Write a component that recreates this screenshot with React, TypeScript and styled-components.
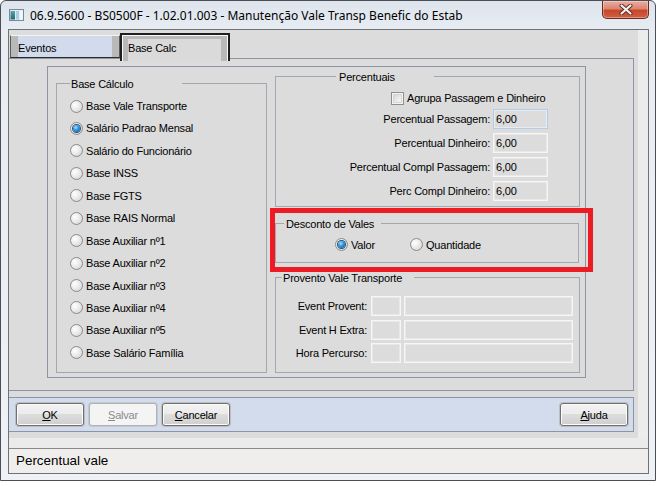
import React from "react";
import styled, { createGlobalStyle, css } from "styled-components";

const GlobalStyle = createGlobalStyle`
  html, body { margin: 0; padding: 0; background: #ffffff; }
  body { font-family: "Liberation Sans", Arial, sans-serif; color: #000; }
  * { box-sizing: border-box; }
`;

const Window = styled.div`
  width: 656px;
  height: 481px;
  border: 1px solid #4b4f55;
  border-radius: 6px 6px 0 0;
  background: linear-gradient(180deg, #dde4ec 0%, #e8edf3 30px, #eef1f5 100%);
  display: flex;
  flex-direction: column;
  overflow: hidden;
`;

const TitleBar = styled.div`
  height: 28px;
  flex: none;
  display: flex;
  align-items: center;
  padding: 0 6px 0 8px;
`;

const Title = styled.span`
  margin-left: 6px;
  font-family: "Noto Sans", "Liberation Sans", sans-serif;
  font-size: 12px;
  color: #000;
  white-space: nowrap;
`;

const CloseButton = styled.div`
  align-self: flex-start;
  margin-left: auto;
  width: 47px;
  height: 18px;
  border: 1px solid #6a2a1f;
  border-top: none;
  border-radius: 0 0 5px 5px;
  background: linear-gradient(180deg, #e9ada0 0%, #dc8570 45%, #c8462c 55%, #d0603f 100%);
  box-shadow: inset 0 0 0 1px rgba(255, 255, 255, 0.35);
  display: flex;
  align-items: center;
  justify-content: center;
`;

const Client = styled.div`
  flex: 1;
  margin: 0 6px 6px 7px;
  border: 1px solid #6e7175;
  background: #dcdcdc;
  display: flex;
  flex-direction: column;
`;

const Workspace = styled.div`
  display: flex;
  height: 408px;
  flex: none;
`;

const Main = styled.div`
  width: 625px;
  display: flex;
  flex-direction: column;
`;

const SideStrip = styled.div`
  width: 10px;
  margin-left: 4px;
  background: #ececec;
`;

const Band = styled.div`
  height: 10px;
  flex: none;
  background: #ebebeb;
`;

const StatusBar = styled.div`
  height: 25px;
  flex: none;
  border-top: 1px solid #8a8a8a;
  background: #f0eeec;
  padding-left: 7px;
  font-size: 13.4px;
  line-height: 24px;
`;

const TabRow = styled.div`
  height: 28px;
  flex: none;
  display: flex;
  align-items: flex-end;
  padding-left: 1px;
`;

const Tab = styled.div<{ $active?: boolean }>`
  width: 110px;
  font-size: 11px;
  letter-spacing: -0.2px;
  display: flex;
  align-items: center;
  ${(p) =>
    p.$active
      ? css`
          height: 28px;
          margin-bottom: -3px;
          position: relative;
          z-index: 1;
          border: 2px solid #1f1f1f;
          border-bottom: none;
          background: #dadada;
          padding-left: 6px;
          box-shadow: inset 1px 1px 0 #f8f8f8, inset -1px 0 0 #f8f8f8, inset 6px 4px 0 #b9b9b9,
            inset -7px 0 0 #b9b9b9;
        `
      : css`
          height: 23px;
          border: 1px solid #5a5a5a;
          border-top-color: #f4f4f4;
          border-bottom-color: #2b2b2b;
          background: #d1dbeb;
          padding: 2px 0 0 7px;
          box-shadow: inset 7px 0 0 #b9b9b9, inset -7px 0 0 #b9b9b9;
        `}
`;

const TabPage = styled.div`
  height: 333px;
  flex: none;
  border: 1px solid #8d95a3;
  border-left: none;
  padding: 7px 0 0 38px;
`;

const OuterPanel = styled.div`
  width: 539px;
  height: 312px;
  border: 1px solid #8d95a3;
  display: flex;
  align-items: flex-start;
  gap: 8px;
  padding: 9px 5px 4px 8px;
`;

const Group = styled.div<{ $w: number; $h: number; $top?: number }>`
  position: relative;
  flex: none;
  width: ${(p) => p.$w}px;
  height: ${(p) => p.$h}px;
  margin-top: ${(p) => p.$top ?? 0}px;
  border: 1px solid #a2a7b0;
`;

const Caption = styled.span<{ $left: number; $width: number; $pad: number }>`
  position: absolute;
  top: -7px;
  left: ${(p) => p.$left}px;
  width: ${(p) => p.$width}px;
  height: 15px;
  line-height: 15px;
  padding-left: ${(p) => p.$pad}px;
  background: #dcdcdc;
  font-size: 11px;
  letter-spacing: -0.2px;
  white-space: nowrap;
`;

const RightColumn = styled.div`
  position: relative;
  width: 305px;
  display: flex;
  flex-direction: column;
`;

const RadioList = styled.div`
  padding: 10.8px 0 0 13px;
`;

const RadioItem = styled.label<{ $w?: number }>`
  display: flex;
  align-items: center;
  gap: 3px;
  height: 22.45px;
  width: ${(p) => (p.$w ? `${p.$w}px` : "auto")};
  font-size: 11px;
  letter-spacing: -0.2px;
  white-space: nowrap;
`;

const RadioDot = styled.span<{ $checked?: boolean }>`
  flex: none;
  width: 13px;
  height: 13px;
  border-radius: 50%;
  border: 1px solid #8a8b8c;
  background: radial-gradient(circle at 35% 35%, #ffffff 0%, #ebebeb 45%, #cdcdcd 100%);
  display: flex;
  align-items: center;
  justify-content: center;
  &::after {
    content: "";
    display: ${(p) => (p.$checked ? "block" : "none")};
    width: 7px;
    height: 7px;
    border-radius: 50%;
    background: radial-gradient(circle at 40% 35%, #a4e0ff 0%, #2d92d8 45%, #0b4e8a 100%);
    box-shadow: 0 0 0 1px #24507c;
  }
`;

const PctBody = styled.div`
  padding: 12px 30px 0 0;
`;

const CheckRow = styled.label`
  height: 18px;
  display: flex;
  align-items: center;
  gap: 3px;
  padding-left: 115px;
  font-size: 11px;
  letter-spacing: -0.2px;
  white-space: nowrap;
`;

const CheckBox = styled.span`
  flex: none;
  width: 13px;
  height: 13px;
  border: 1px solid #8e8f8f;
  background: linear-gradient(135deg, #c9cbcd 0%, #eeeeee 60%, #f8f8f8 100%);
  box-shadow: inset 0 0 0 1px #f4f4f4, inset 0 0 0 2px #d4d6d8;
`;

const FieldRow = styled.div`
  height: 24px;
  display: grid;
  grid-template-columns: 214px 55px;
  column-gap: 3px;
  align-items: center;
`;

const FieldLabel = styled.span`
  text-align: right;
  font-size: 11px;
  letter-spacing: -0.2px;
  white-space: nowrap;
`;

const Field = styled.div<{ $focus?: boolean }>`
  height: 20px;
  border: 1px solid ${(p) => (p.$focus ? "#b3cde6" : "#f6f6f6")};
  box-shadow: inset 0 0 0 1px ${(p) => (p.$focus ? "#e4edf6" : "#e8e8e8")};
  background: #dcdcdc;
  padding-left: 2px;
  font-size: 11px;
  letter-spacing: -0.2px;
  line-height: 18px;
`;

const DescBody = styled.div`
  display: flex;
  padding: 9.5px 0 0 59px;
`;

const ProvBody = styled.div`
  display: grid;
  grid-template-columns: 91px 30px 169px;
  grid-auto-rows: 20px;
  column-gap: 3.5px;
  row-gap: 3.5px;
  align-items: center;
  padding-top: 18px;
`;

const Highlight = styled.div`
  position: absolute;
  left: -5px;
  top: 132px;
  width: 323px;
  height: 64px;
  border: 5px solid #ed1c24;
  pointer-events: none;
`;

const ButtonBar = styled.div`
  height: 35px;
  flex: none;
  margin-top: 6px;
  border: 1px solid #8c95a5;
  border-left: none;
  background: #d3dcec;
  display: flex;
  align-items: center;
  gap: 5px;
  padding: 0 5px 0 7px;
`;

const Button = styled.div<{ $disabled?: boolean; $right?: boolean }>`
  width: 68px;
  height: 23px;
  margin-left: ${(p) => (p.$right ? "auto" : "0")};
  border-radius: 3px;
  font-size: 11px;
  letter-spacing: -0.2px;
  display: flex;
  align-items: center;
  justify-content: center;
  ${(p) =>
    p.$disabled
      ? css`
          border: 1px solid #adb2b5;
          background: #f4f4f4;
          color: #8a8a8a;
          box-shadow: 0 0 0 1px #c6c9cc;
        `
      : css`
          border: 1px solid #707070;
          background: linear-gradient(180deg, #f2f2f2 0%, #ebebeb 50%, #dddddd 50%, #cfcfcf 100%);
          box-shadow: inset 0 0 0 1px #fbfbfb, 0 0 0 1px #bdbdbd;
        `}
`;

const AppIcon = () => (
  <svg width="15" height="12" viewBox="0 0 15 12">
    <defs>
      <linearGradient id="ic" x1="0" y1="0" x2="0" y2="1">
        <stop offset="0" stopColor="#57a4a9" />
        <stop offset="1" stopColor="#1f6a78" />
      </linearGradient>
    </defs>
    <rect x="0.5" y="0.5" width="14" height="11" fill="#e4eaf0" stroke="#7b8a99" />
    <rect x="1.5" y="2" width="4.5" height="8.5" fill="url(#ic)" />
    <rect x="7" y="2" width="3" height="8.5" fill="#a9cfe4" />
    <rect x="11" y="2" width="2.5" height="8.5" fill="#f7f9fb" />
  </svg>
);

const CloseGlyph = () => (
  <svg width="14" height="11" viewBox="0 0 14 11">
    <path d="M2.5 1.5 L11.5 9.5 M11.5 1.5 L2.5 9.5" stroke="#5c2a22" strokeWidth="4" strokeLinecap="round" />
    <path d="M2.5 1.5 L11.5 9.5 M11.5 1.5 L2.5 9.5" stroke="#f4f1f0" strokeWidth="2.2" strokeLinecap="round" />
  </svg>
);

const baseOptions = [
  "Base Vale Transporte",
  "Salário Padrao Mensal",
  "Salário do Funcionário",
  "Base INSS",
  "Base FGTS",
  "Base RAIS Normal",
  "Base Auxiliar nº1",
  "Base Auxiliar nº2",
  "Base Auxiliar nº3",
  "Base Auxiliar nº4",
  "Base Auxiliar nº5",
  "Base Salário Família",
];

const percentuais = [
  { label: "Percentual Passagem:", value: "6,00", focus: true },
  { label: "Percentual Dinheiro:", value: "6,00" },
  { label: "Percentual Compl Passagem:", value: "6,00" },
  { label: "Perc Compl Dinheiro:", value: "6,00" },
];

const proventos = ["Event Provent:", "Event H Extra:", "Hora Percurso:"];

export default function App() {
  return (
    <>
      <GlobalStyle />
      <Window>
        <TitleBar>
          <AppIcon />
          <Title>06.9.5600 - BS0500F - 1.02.01.003 - Manutenção Vale Transp Benefic do Estab</Title>
          <CloseButton>
            <CloseGlyph />
          </CloseButton>
        </TitleBar>
        <Client>
          <Workspace>
            <Main>
              <TabRow>
                <Tab>Eventos</Tab>
                <Tab $active>Base Calc</Tab>
              </TabRow>
              <TabPage>
                <OuterPanel>
                  <Group $w={211} $h={290} $top={7}>
                    <Caption $left={13} $width={112} $pad={1}>
                      Base Cálculo
                    </Caption>
                    <RadioList>
                      {baseOptions.map((o, i) => (
                        <RadioItem key={o}>
                          <RadioDot $checked={i === 1} />
                          {o}
                        </RadioItem>
                      ))}
                    </RadioList>
                  </Group>
                  <RightColumn>
                    <Group $w={305} $h={131}>
                      <Caption $left={60} $width={98} $pad={3}>
                        Percentuais
                      </Caption>
                      <PctBody>
                        <CheckRow>
                          <CheckBox />
                          Agrupa Passagem e Dinheiro
                        </CheckRow>
                        {percentuais.map((r) => (
                          <FieldRow key={r.label}>
                            <FieldLabel>{r.label}</FieldLabel>
                            <Field $focus={r.focus}>{r.value}</Field>
                          </FieldRow>
                        ))}
                      </PctBody>
                    </Group>
                    <Group $w={304} $h={40} $top={16}>
                      <Caption $left={8} $width={97} $pad={2}>
                        Desconto de Vales
                      </Caption>
                      <DescBody>
                        <RadioItem $w={75}>
                          <RadioDot $checked />
                          Valor
                        </RadioItem>
                        <RadioItem>
                          <RadioDot />
                          Quantidade
                        </RadioItem>
                      </DescBody>
                    </Group>
                    <Group $w={305} $h={96} $top={14}>
                      <Caption $left={6} $width={132} $pad={1}>
                        Provento Vale Transporte
                      </Caption>
                      <ProvBody>
                        {proventos.map((p) => (
                          <React.Fragment key={p}>
                            <FieldLabel>{p}</FieldLabel>
                            <Field />
                            <Field />
                          </React.Fragment>
                        ))}
                      </ProvBody>
                    </Group>
                    <Highlight />
                  </RightColumn>
                </OuterPanel>
              </TabPage>
              <ButtonBar>
                <Button>
                  <u>O</u>K
                </Button>
                <Button $disabled>
                  <u>S</u>alvar
                </Button>
                <Button>
                  <u>C</u>ancelar
                </Button>
                <Button $right>
                  <u>A</u>juda
                </Button>
              </ButtonBar>
            </Main>
            <SideStrip />
          </Workspace>
          <Band />
          <StatusBar>Percentual vale</StatusBar>
        </Client>
      </Window>
    </>
  );
}
